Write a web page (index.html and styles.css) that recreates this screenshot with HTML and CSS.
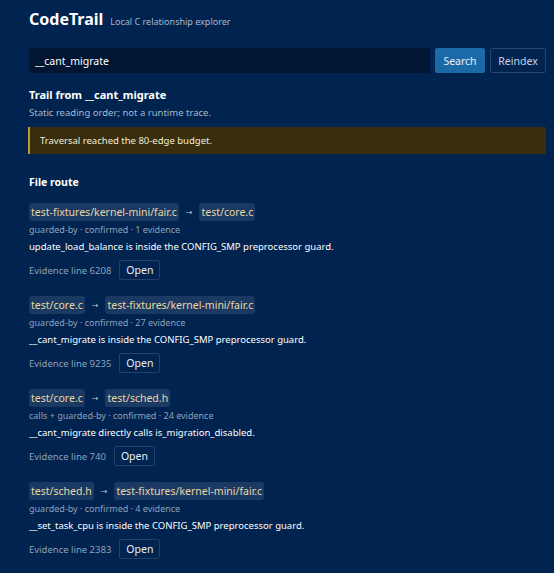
FILE: index.html
```html
<!DOCTYPE html>
<html lang="en">
<head>
<meta charset="utf-8">
<title>CodeTrail</title>
<link rel="stylesheet" href="styles.css">
</head>
<body>
<main class="app">
  <header class="top">
    <h1 class="brand">CodeTrail</h1>
    <span class="tagline">Local C relationship explorer</span>
  </header>
  <form class="search">
    <input class="query" type="text" value="__cant_migrate">
    <button class="btn primary" type="button">Search</button>
    <button class="btn ghost" type="button">Reindex</button>
  </form>
  <section class="trail">
    <h2 class="trail-title">Trail from __cant_migrate</h2>
    <p class="trail-note">Static reading order; not a runtime trace.</p>
    <div class="warning">Traversal reached the 80-edge budget.</div>
    <h3 class="route-title">File route</h3>
    <ol class="route">
      <li class="step">
        <div class="files"><span class="chip">test-fixtures/kernel-mini/fair.c</span><span class="arrow">→</span><span class="chip">test/core.c</span></div>
        <div class="meta">guarded-by · confirmed · 1 evidence</div>
        <div class="desc">update_load_balance is inside the CONFIG_SMP preprocessor guard.</div>
        <div class="evidence"><span class="line">Evidence line 6208</span><button class="btn open" type="button">Open</button></div>
      </li>
      <li class="step">
        <div class="files"><span class="chip">test/core.c</span><span class="arrow">→</span><span class="chip">test-fixtures/kernel-mini/fair.c</span></div>
        <div class="meta">guarded-by · confirmed · 27 evidence</div>
        <div class="desc">__cant_migrate is inside the CONFIG_SMP preprocessor guard.</div>
        <div class="evidence"><span class="line">Evidence line 9235</span><button class="btn open" type="button">Open</button></div>
      </li>
      <li class="step">
        <div class="files"><span class="chip">test/core.c</span><span class="arrow">→</span><span class="chip">test/sched.h</span></div>
        <div class="meta">calls + guarded-by · confirmed · 24 evidence</div>
        <div class="desc">__cant_migrate directly calls is_migration_disabled.</div>
        <div class="evidence"><span class="line">Evidence line 740</span><button class="btn open" type="button">Open</button></div>
      </li>
      <li class="step">
        <div class="files"><span class="chip">test/sched.h</span><span class="arrow">→</span><span class="chip">test-fixtures/kernel-mini/fair.c</span></div>
        <div class="meta">guarded-by · confirmed · 4 evidence</div>
        <div class="desc">__set_task_cpu is inside the CONFIG_SMP preprocessor guard.</div>
        <div class="evidence"><span class="line">Evidence line 2383</span><button class="btn open" type="button">Open</button></div>
      </li>
    </ol>
  </section>
</main>
</body>
</html>
```

FILE: styles.css
```css
* { box-sizing: border-box; }
html, body { margin: 0; padding: 0; }
body {
  background: #00234f;
  color: #ffffff;
  font-family: "Noto Sans", "Open Sans", sans-serif;
  font-size: 10px;
}
.app {
  padding: 8px 8px 16px 29px;
}
.top {
  display: flex;
  align-items: baseline;
  gap: 7px;
  height: 26px;
}
.brand {
  margin: 0;
  font-size: 16px;
  font-weight: 700;
  line-height: 22px;
}
.tagline {
  font-size: 9px;
  color: #a9b8cc;
}
.search {
  display: flex;
  gap: 5px;
  margin: 14px 0 0;
  height: 25px;
}
.query {
  flex: 1;
  background: #001633;
  border: 1px solid #001633;
  color: #ffffff;
  font: inherit;
  font-size: 10.5px;
  padding: 0 5px;
  outline: none;
}
.btn {
  font: inherit;
  font-size: 10.5px;
  color: #e8eef6;
  border-radius: 2px;
  cursor: pointer;
}
.primary {
  background: #1b6aa8;
  border: 1px solid #1b6aa8;
  width: 50px;
}
.ghost {
  background: transparent;
  border: 1px solid #2a456d;
  width: 56px;
  color: #c8d4e4;
}
.trail-title {
  margin: 14px 0 0;
  font-size: 11px;
  font-weight: 700;
  line-height: 16px;
}
.trail-note {
  margin: 3px 0 0;
  font-size: 9.5px;
  color: #a9b8cc;
  line-height: 13px;
}
.warning {
  margin: 8px 0 0 -1px;
  height: 27px;
  display: flex;
  align-items: center;
  padding-left: 10px;
  background: #382e0d;
  border-left: 2px solid #b39a34;
  font-size: 9.5px;
  color: #f2ecd8;
}
.route-title {
  margin: 21px 0 0;
  font-size: 10.5px;
  font-weight: 700;
  line-height: 14px;
}
.route {
  list-style: none;
  margin: 14px 0 0;
  padding: 0;
  display: flex;
  flex-direction: column;
  gap: 16px;
}
.step {
  display: flex;
  flex-direction: column;
}
.files {
  display: flex;
  align-items: center;
  gap: 6px;
  height: 18px;
}
.chip {
  background: #1a3a63;
  color: #e9d6a6;
  padding: 0 2px;
  border-radius: 3px;
  font-size: 10.5px;
  line-height: 18px;
}
.arrow {
  color: #b6c3d6;
  font-family: "DejaVu Sans", sans-serif;
  font-size: 8px;
  padding: 0 1px;
}
.meta {
  margin-top: 2px;
  font-size: 9px;
  color: #8ea2bd;
  line-height: 13px;
}
.desc {
  margin-top: 4px;
  font-size: 9.5px;
  line-height: 14px;
  color: #ffffff;
}
.evidence {
  margin-top: 6px;
  display: flex;
  align-items: center;
  gap: 8px;
}
.line {
  font-size: 9.5px;
  color: #8ea2bd;
}
.open {
  background: transparent;
  border: 1px solid #23406a;
  padding: 0 6px;
  height: 20px;
  font-size: 10.5px;
  color: #e8eef6;
}
```
